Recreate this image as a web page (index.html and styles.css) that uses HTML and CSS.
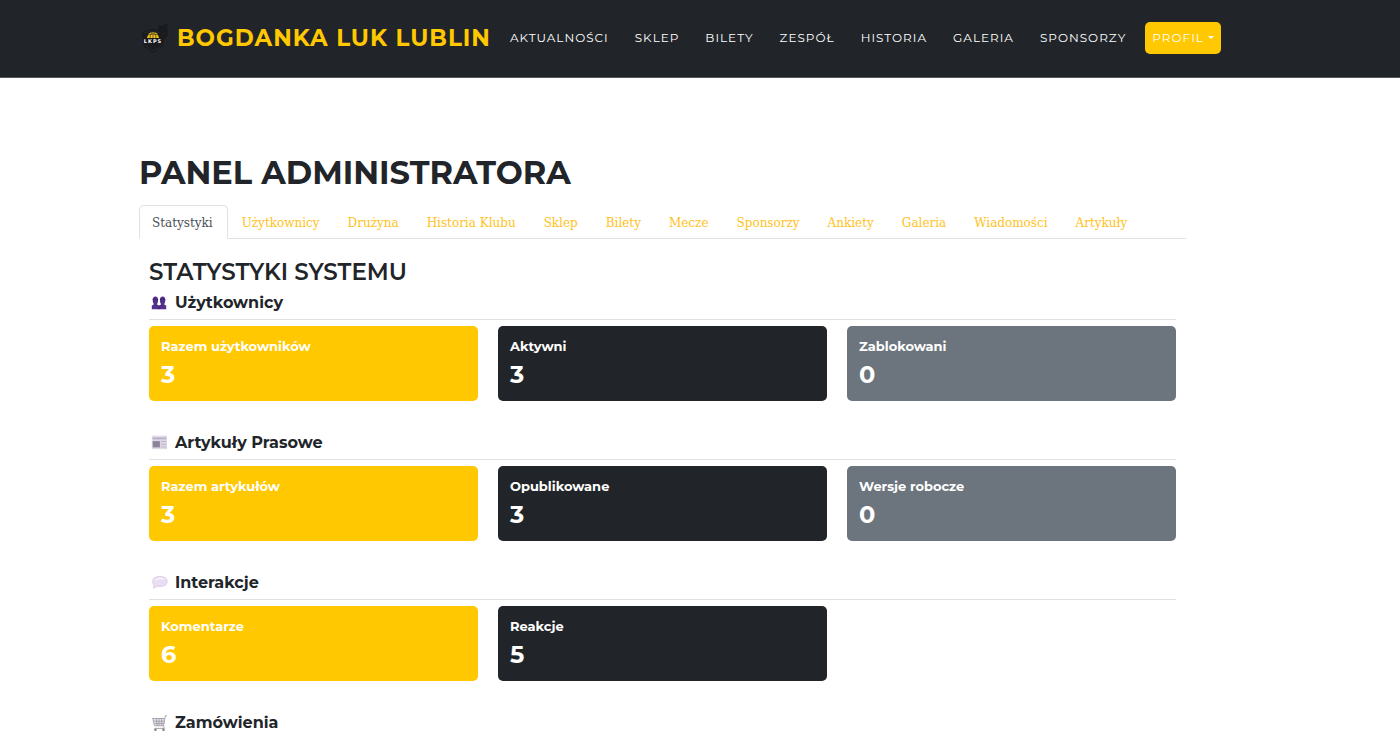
FILE: index.html
```html
<!DOCTYPE html>
<html lang="pl">
<head>
<meta charset="utf-8">
<meta name="viewport" content="width=device-width, initial-scale=1">
<title>Panel administratora</title>
<link rel="stylesheet" href="styles.css">
</head>
<body>
<header class="navbar">
  <a class="brand" href="#">
    <svg class="brand-logo" viewBox="0 0 32 36" aria-hidden="true">
      <path fill="#191b1e" d="M3 12 8 10 14 9 19 10 20 7 19 5 23 6 29 3 28 8 30 12 28 17 25 20 24 26 14 33 5 27 3 20Z"/>
      <path fill="none" stroke="#26292d" d="M5 13 13 11 21 13M6 24 8 27 14 31 21 27 23 24"/>
      <path fill="#f5c518" d="M8 18q1-6 6-6t6 6Z"/>
      <path fill="none" stroke="#22252a" stroke-width=".6" d="M14 12v6M9 15q5-2 10 0M11 18q0-3 2-6M17 18q0-3-2-6"/>
      <text class="logo-text" x="14" y="23" text-anchor="middle">LKPS</text>
    </svg>
    <span>BOGDANKA LUK LUBLIN</span>
  </a>
  <nav class="nav-links" aria-label="Menu główne">
    <a href="#">AKTUALNOŚCI</a>
    <a href="#">SKLEP</a>
    <a href="#">BILETY</a>
    <a href="#">ZESPÓŁ</a>
    <a href="#">HISTORIA</a>
    <a href="#">GALERIA</a>
    <a href="#">SPONSORZY</a>
  </nav>
  <button class="profile" type="button">PROFIL<span class="caret"></span></button>
</header>
<main class="page">
  <h1>PANEL ADMINISTRATORA</h1>
  <nav class="tabs" aria-label="Sekcje panelu">
    <a class="tab active" href="#">Statystyki</a>
    <a class="tab" href="#">Użytkownicy</a>
    <a class="tab" href="#">Drużyna</a>
    <a class="tab" href="#">Historia Klubu</a>
    <a class="tab" href="#">Sklep</a>
    <a class="tab" href="#">Bilety</a>
    <a class="tab" href="#">Mecze</a>
    <a class="tab" href="#">Sponsorzy</a>
    <a class="tab" href="#">Ankiety</a>
    <a class="tab" href="#">Galeria</a>
    <a class="tab" href="#">Wiadomości</a>
    <a class="tab" href="#">Artykuły</a>
  </nav>
  <div class="stats">
    <h2>STATYSTYKI SYSTEMU</h2>
    <section class="group">
      <h3>
        <svg class="icon" viewBox="0 0 20 20" aria-hidden="true"><g fill="#54308a"><path d="M3 8q0-4 3-4t3 4q0 3-1 4v1l2 1v4H2v-4l2-1v-1Q3 11 3 8Z"/><path d="M11 8q0-4 3-4t3 4q0 3-1 4v1l2 1v4h-8v-4l2-1v-1q-1-1-1-4Z"/></g><path fill="none" stroke="#3c2067" d="M3 7q2 1 3-1 1 2 3 1M11 7q2 1 3-1 1 2 3 1M10 14v4"/></svg>
        Użytkownicy
      </h3>
      <div class="cards">
        <div class="card yellow"><h4>Razem użytkowników</h4><p>3</p></div>
        <div class="card dark"><h4>Aktywni</h4><p>3</p></div>
        <div class="card gray"><h4>Zablokowani</h4><p>0</p></div>
      </div>
    </section>
    <section class="group">
      <h3>
        <svg class="icon" viewBox="0 0 20 20" aria-hidden="true"><path fill="#dfd9e7" d="M2 3h17v15H2Z"/><path fill="#b8afc6" d="M3 5h15v2H3Z"/><path stroke="#b8afc6" d="M12 9.500h6M12 12.500h6M12 15.500h6"/><path fill="#8d839b" d="M3 9h8v7H3Z"/></svg>
        Artykuły Prasowe
      </h3>
      <div class="cards">
        <div class="card yellow"><h4>Razem artykułów</h4><p>3</p></div>
        <div class="card dark"><h4>Opublikowane</h4><p>3</p></div>
        <div class="card gray"><h4>Wersje robocze</h4><p>0</p></div>
      </div>
    </section>
    <section class="group">
      <h3>
        <svg class="icon" viewBox="0 0 20 20" aria-hidden="true"><path fill="#e9def3" stroke="#cfc0de" stroke-width=".8" d="M11 4c5 0 8 2 8 5.500S16 15 11 15L8 14.700 4 17l.5-3.500C3 12.500 3 11 3 9.500 3 6 6 4 11 4Z"/><path fill="#f8f3fc" d="M5 9q1-4 7-4 4 0 5 2-7-1-12 2Z"/></svg>
        Interakcje
      </h3>
      <div class="cards">
        <div class="card yellow"><h4>Komentarze</h4><p>6</p></div>
        <div class="card dark"><h4>Reakcje</h4><p>5</p></div>
      </div>
    </section>
    <section class="group">
      <h3>
        <svg class="icon" viewBox="0 0 20 20" aria-hidden="true"><path fill="#e9e6ed" d="M3 5h14l-2 8H5Z"/><path fill="none" stroke="#a19ca9" d="M19 2h-2l-2 11H5L3 5h13M4 8h12M5 10.500h11M7 5l1 8M10 5v8M13 5v8M15 13l1 3H5"/><g fill="#8a8492"><circle cx="6" cy="17.500" r="1.500"/><circle cx="15" cy="17.500" r="1.500"/></g></svg>
        Zamówienia
      </h3>
    </section>
  </div>
</main>
</body>
</html>
```
FILE: styles.css
```css
* { box-sizing: border-box; }
body {
  margin: 0;
  background: #fff;
  color: #212529;
  font-family: Montserrat, Inter, "Open Sans", sans-serif;
}
h1, h2, h3, h4, p { margin: 0; }
a { color: inherit; text-decoration: none; }

.navbar {
  display: flex;
  align-items: center;
  height: 78px;
  padding: 0 139px 2px;
  background: #212529;
  border-bottom: 1px solid #55585b;
}
.brand {
  display: flex;
  align-items: center;
  gap: 6px;
  color: #ffc800;
  font-size: 23px;
  font-weight: 700;
  letter-spacing: 1px;
  white-space: nowrap;
}
.brand-logo { width: 32px; height: 36px; }
.logo-text { font: 700 5px "DejaVu Sans", sans-serif; fill: #fff; }
.nav-links {
  display: flex;
  gap: 26px;
  margin-left: 19px;
  color: #fff;
  font-size: 12px;
  letter-spacing: 1px;
}
.profile {
  display: flex;
  align-items: center;
  gap: 4px;
  height: 32px;
  margin-left: 19px;
  padding: 0 7px;
  border: 0;
  border-radius: 5px;
  background: #ffc800;
  color: #fff;
  font: inherit;
  font-size: 12px;
  letter-spacing: 1px;
}
.caret {
  border: 3px solid transparent;
  border-top-color: #fff;
  border-bottom: 0;
}

.page { padding: 75px 214px 0 139px; }
h1 { font-size: 32px; line-height: 40px; font-weight: 700; white-space: nowrap; }
.tabs {
  display: flex;
  margin-top: 12px;
  border-bottom: 1px solid #dee2e6;
  font-family: "Roboto Slab", "DejaVu Serif", serif;
  font-size: 12px;
  line-height: 18px;
  color: #ffc21a;
}
.tab {
  margin-bottom: -1px;
  padding: 8px 13px 6px;
  border: 1px solid transparent;
  border-radius: 5px 5px 0 0;
  white-space: nowrap;
}
.tab.active {
  padding: 8px 14px 6px 12px;
  border-color: #dee2e6 #dee2e6 #fff;
  background: #fff;
  color: #495057;
}

.stats { padding: 19px 10px 0; }
h2 { font-size: 23px; line-height: 29px; font-weight: 600; }
.group { margin-bottom: 26px; }
h3 {
  display: flex;
  align-items: center;
  gap: 6px;
  height: 33px;
  padding-bottom: 2px;
  font-size: 16px;
  font-weight: 700;
  border-bottom: 1px solid #dee2e6;
}
.group:last-child { margin-bottom: 0; }
.group:last-child h3 { border: 0; }
.icon { width: 20px; height: 18px; }
.cards {
  display: grid;
  grid-template-columns: repeat(3, 1fr);
  gap: 20px;
  margin-top: 6px;
}
.card {
  padding: 12px;
  border-radius: 5px;
  color: #fff;
}
.card h4 { font-size: 13px; line-height: 16px; font-weight: 700; }
.card p { margin-top: 7px; font-size: 24px; line-height: 28px; font-weight: 700; }
.yellow { background: #ffc800; }
.dark { background: #212529; }
.gray { background: #6c757d; }
```
